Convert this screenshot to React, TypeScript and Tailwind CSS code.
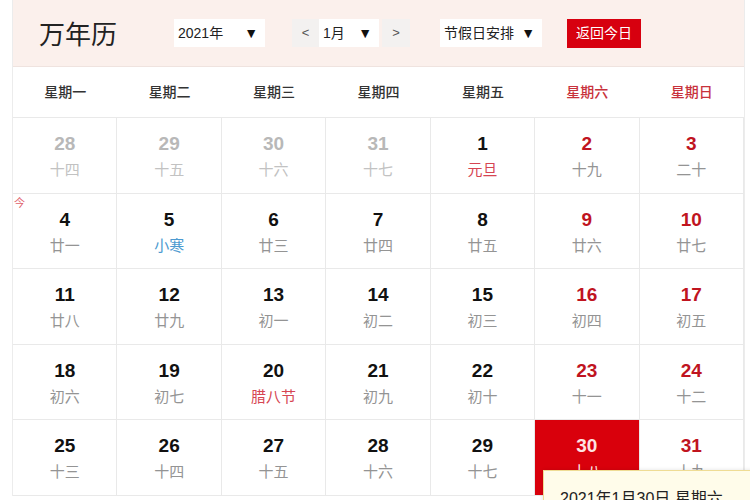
import React from "react";

type Cell = {
  d: number;
  l: string;
  other?: boolean;
  weekend?: boolean;
  lc?: "red" | "blue";
  today?: boolean;
  selected?: boolean;
};

const rows: Cell[][] = [
  [
    { d: 28, l: "十四", other: true },
    { d: 29, l: "十五", other: true },
    { d: 30, l: "十六", other: true },
    { d: 31, l: "十七", other: true },
    { d: 1, l: "元旦", lc: "red" },
    { d: 2, l: "十九", weekend: true },
    { d: 3, l: "二十", weekend: true },
  ],
  [
    { d: 4, l: "廿一", today: true },
    { d: 5, l: "小寒", lc: "blue" },
    { d: 6, l: "廿三" },
    { d: 7, l: "廿四" },
    { d: 8, l: "廿五" },
    { d: 9, l: "廿六", weekend: true },
    { d: 10, l: "廿七", weekend: true },
  ],
  [
    { d: 11, l: "廿八" },
    { d: 12, l: "廿九" },
    { d: 13, l: "初一" },
    { d: 14, l: "初二" },
    { d: 15, l: "初三" },
    { d: 16, l: "初四", weekend: true },
    { d: 17, l: "初五", weekend: true },
  ],
  [
    { d: 18, l: "初六" },
    { d: 19, l: "初七" },
    { d: 20, l: "腊八节", lc: "red" },
    { d: 21, l: "初九" },
    { d: 22, l: "初十" },
    { d: 23, l: "十一", weekend: true },
    { d: 24, l: "十二", weekend: true },
  ],
  [
    { d: 25, l: "十三" },
    { d: 26, l: "十四" },
    { d: 27, l: "十五" },
    { d: 28, l: "十六" },
    { d: 29, l: "十七" },
    { d: 30, l: "十八", weekend: true, selected: true },
    { d: 31, l: "十九", weekend: true },
  ],
];

const weekdays = ["星期一", "星期二", "星期三", "星期四", "星期五", "星期六", "星期日"];

function DayCell({ c }: { c: Cell }) {
  let numCls = "text-[#111111]";
  if (c.other) numCls = "text-[#b8b8b8]";
  else if (c.selected) numCls = "text-[#fde3e3]";
  else if (c.weekend) numCls = "text-[#c0141f]";

  let lunCls = "text-[#949494]";
  if (c.other) lunCls = "text-[#c2c2c2]";
  else if (c.selected) lunCls = "text-[#fff2f2]";
  else if (c.lc === "red") lunCls = "text-[#d64552]";
  else if (c.lc === "blue") lunCls = "text-[#4c9ad0]";

  return (
    <div
      className={
        "relative h-[75.5px] border-r border-b border-[#e9e9e9] flex flex-col items-center pt-[16px] " +
        (c.selected ? "bg-[#d9000c]" : "bg-white")
      }
    >
      {c.today && (
        <span className="absolute left-[1px] top-[2px] text-[11px] leading-[14px] text-[#e0606a]">今</span>
      )}
      <div className={"text-[19px] leading-[20px] font-bold " + numCls}>{c.d}</div>
      <div className={"mt-[6px] text-[15px] leading-[20px] " + lunCls}>{c.l}</div>
    </div>
  );
}

function Arrow() {
  return <span className="text-[14px] leading-[14px] text-[#111111]">▼</span>;
}

export default function App() {
  return (
    <div
      className="relative w-[750px] h-[500px] overflow-hidden bg-white"
      style={{ fontFamily: '"Liberation Sans", "Noto Sans CJK SC", sans-serif' }}
    >
      <div className="ml-[12px] w-[733px] border-l border-r border-[#ececec]">
        {/* top bar */}
        <div className="h-[67px] bg-[#fbf0ec] border-b border-[#efe3df] flex items-center">
          <div className="ml-[26px] text-[26px] leading-[30px] text-[#222222]" style={{ fontFamily: '"Noto Sans CJK SC", sans-serif' }}>
            万年历
          </div>
          <div className="ml-[57px] w-[91px] h-[28px] bg-white flex items-center justify-between pl-[4px] pr-[7px] text-[14px] text-[#222222]">
            <span>2021年</span>
            <Arrow />
          </div>
          <div className="ml-[27px] w-[27px] h-[28px] bg-[#f3f1f0] flex items-center justify-center text-[13px] text-[#555555]">
            &lt;
          </div>
          <div className="w-[60px] h-[28px] bg-white flex items-center justify-between pl-[4px] pr-[7px] text-[14px] text-[#222222]">
            <span>1月</span>
            <Arrow />
          </div>
          <div className="ml-[3px] w-[28px] h-[28px] bg-[#f3f1f0] flex items-center justify-center text-[13px] text-[#555555]">
            &gt;
          </div>
          <div className="ml-[30px] w-[102px] h-[28px] bg-white flex items-center justify-between pl-[4px] pr-[7px] text-[14px] text-[#222222]">
            <span>节假日安排</span>
            <Arrow />
          </div>
          <div className="ml-[25px] w-[74px] h-[29px] bg-[#d7000f] flex items-center justify-center text-[14px] text-white">
            返回今日
          </div>
        </div>
        {/* weekdays */}
        <div className="grid grid-cols-7 h-[51px] bg-white border-b border-[#e9e9e9]">
          {weekdays.map((w, i) => (
            <div
              key={w}
              className={
                "flex items-center justify-center text-[14px] font-medium " +
                (i >= 5 ? "text-[#c8323c]" : "text-[#333333]")
              }
            >
              {w}
            </div>
          ))}
        </div>
        {/* days */}
        <div className="grid grid-cols-7">
          {rows.flat().map((c, i) => (
            <DayCell key={i} c={c} />
          ))}
        </div>
      </div>
      {/* tooltip */}
      <div className="absolute left-[543px] top-[470px] w-[240px] h-[60px] bg-[#fffcea] border border-[#efdc95] shadow-[0_0_4px_rgba(0,0,0,0.12)] pl-[16px] pt-[16px]">
        <span className="text-[16px] leading-[20px] text-[#222222] whitespace-nowrap">2021年1月30日 星期六</span>
      </div>
    </div>
  );
}
